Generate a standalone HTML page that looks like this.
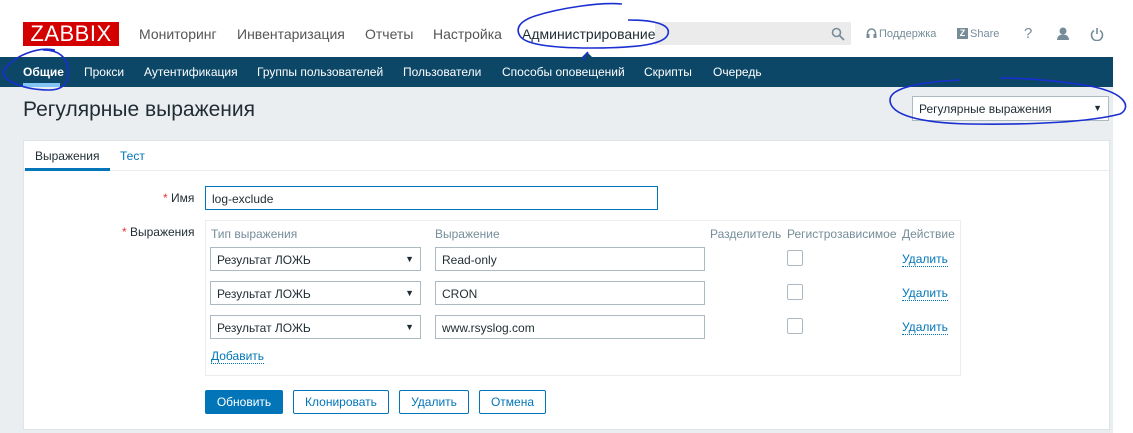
<!DOCTYPE html>
<html><head><meta charset="utf-8"><style>
*{box-sizing:border-box;margin:0;padding:0}
body{width:1133px;height:433px;overflow:hidden;background:#fff;font-family:"Liberation Sans",Arial,sans-serif;position:relative;color:#1f2c33}
.a{position:absolute;white-space:nowrap}
.nav{font-size:14px;color:#555;top:26px}
.sub{font-size:12px;color:#fff;top:65px}
.lbl{font-size:12px;color:#1f2c33}
.star{color:#e33734}
.hdr{font-size:12px;color:#768d99;top:227px}
.sel{position:absolute;left:210px;width:211px;height:24px;border:1px solid #acbbc2;font-size:12px;padding:5px 6px}
.sel:after{content:"▼";position:absolute;right:6px;top:6px;font-size:9px}
.inp{position:absolute;left:435px;width:270px;height:24px;border:1px solid #acbbc2;font-size:12px;padding:5px 6px}
.cb{position:absolute;left:787px;width:16px;height:16px;border:1px solid #acbbc2;border-radius:2px}
.lnk{position:absolute;left:902px;font-size:12px;color:#0275b8;border-bottom:1px dotted #0275b8;line-height:13px}
.btn{position:absolute;top:390px;height:24px;border:1px solid #0275b8;border-radius:2px;font-size:12px;color:#0275b8;text-align:center;line-height:22px;background:#fff}
</style></head><body>
<div class="a" style="left:23px;top:22px;width:96px;height:24px;background:#d40000;color:#fff;font-size:22px;line-height:24px;text-align:center;letter-spacing:0.5px">ZABBIX</div>
<div class="a nav" style="left:139px">Мониторинг</div>
<div class="a nav" style="left:237px">Инвентаризация</div>
<div class="a nav" style="left:365px">Отчеты</div>
<div class="a nav" style="left:433px">Настройка</div>
<div class="a" style="left:655px;top:22px;width:196px;height:23px;background:#ebebeb"></div>
<div class="a nav" style="left:522px;color:#1f2c33">Администрирование</div>
<svg class="a" style="left:831px;top:27px" width="14" height="14"><circle cx="5.5" cy="5.5" r="4" fill="none" stroke="#768d99" stroke-width="1.6"/><line x1="8.5" y1="8.5" x2="13" y2="13" stroke="#768d99" stroke-width="1.8"/></svg>
<svg class="a" style="left:866px;top:28px" width="11" height="11"><path d="M1.5 7V5a4 4 0 0 1 8 0v2" fill="none" stroke="#768d99" stroke-width="1.5"/><rect x="0.5" y="6" width="3" height="4" fill="#768d99"/><rect x="7.5" y="6" width="3" height="4" fill="#768d99"/></svg>
<div class="a" style="left:879px;top:28px;font-size:11px;color:#768d99">Поддержка</div>
<div class="a" style="left:957px;top:28px;width:11px;height:11px;background:#768d99;color:#fff;font-size:9px;font-weight:bold;text-align:center;line-height:11px">Z</div>
<div class="a" style="left:970px;top:28px;font-size:11px;color:#768d99">Share</div>
<div class="a" style="left:1024px;top:25px;font-size:15px;color:#768d99">?</div>
<svg class="a" style="left:1056px;top:27px" width="14" height="14"><circle cx="7" cy="4" r="3.5" fill="#768d99"/><path d="M1 13c0-4 3-5.5 6-5.5s6 1.5 6 5.5z" fill="#768d99"/></svg>
<svg class="a" style="left:1090px;top:27px" width="14" height="14"><path d="M4 3.5A5.5 5.5 0 1 0 10 3.5" fill="none" stroke="#768d99" stroke-width="1.6"/><line x1="7" y1="1" x2="7" y2="7" stroke="#768d99" stroke-width="1.6"/></svg>
<div class="a" style="left:0;top:57px;width:1113px;height:30px;background:#0c4767"></div>
<div class="a" style="left:582px;top:52px;width:0;height:0;border-left:5px solid transparent;border-right:5px solid transparent;border-bottom:5px solid #0c4767"></div>
<div class="a sub" style="left:23px;font-weight:bold">Общие</div>
<div class="a" style="left:23px;top:83px;width:37px;height:4px;background:#84c5f5"></div>
<div class="a sub" style="left:84px">Прокси</div>
<div class="a sub" style="left:144px">Аутентификация</div>
<div class="a sub" style="left:257px">Группы пользователей</div>
<div class="a sub" style="left:403px">Пользователи</div>
<div class="a sub" style="left:502px">Способы оповещений</div>
<div class="a sub" style="left:644px">Скрипты</div>
<div class="a sub" style="left:713px">Очередь</div>
<div class="a" style="left:0;top:87px;width:1113px;height:346px;background:#ebeef0"></div>
<div class="a" style="left:23px;top:98px;font-size:21px;color:#1f2c33">Регулярные выражения</div>
<div class="a" style="left:912px;top:96px;width:197px;height:25px;background:#fff;border:1px solid #acbbc2;font-size:12px;padding:5px 6px">Регулярные выражения<span style="position:absolute;right:6px;top:6px;font-size:9px">▼</span></div>
<div class="a" style="left:23px;top:140px;width:1087px;height:290px;background:#fff;border:1px solid #dfe4e7"></div>
<div class="a" style="left:24px;top:170px;width:1085px;height:1px;background:#ebeef0"></div>
<div class="a" style="left:35px;top:149px;font-size:12px;color:#1f2c33">Выражения</div>
<div class="a" style="left:25px;top:168px;width:85px;height:3px;background:#0275b8"></div>
<div class="a" style="left:120px;top:149px;font-size:12px;color:#0275b8">Тест</div>
<div class="a lbl" style="left:163px;top:191px"><span class="star">*</span> Имя</div>
<div class="a" style="left:205px;top:186px;width:453px;height:24px;border:1px solid #0275b8;font-size:12px;padding:5px 6px">log-exclude</div>
<div class="a lbl" style="left:122px;top:225px"><span class="star">*</span> Выражения</div>
<div class="a" style="left:205px;top:220px;width:756px;height:156px;border:1px solid #ebeef0"></div>
<div class="a hdr" style="left:211px">Тип выражения</div>
<div class="a hdr" style="left:435px">Выражение</div>
<div class="a hdr" style="left:710px">Разделитель</div>
<div class="a hdr" style="left:787px">Регистрозависимое</div>
<div class="a hdr" style="left:902px">Действие</div>
<div class="sel" style="top:247px">Результат ЛОЖЬ</div>
<div class="inp" style="top:247px">Read-only</div>
<div class="cb" style="top:250px"></div>
<div class="lnk" style="top:253px">Удалить</div>
<div class="sel" style="top:281px">Результат ЛОЖЬ</div>
<div class="inp" style="top:281px">CRON</div>
<div class="cb" style="top:284px"></div>
<div class="lnk" style="top:287px">Удалить</div>
<div class="sel" style="top:315px">Результат ЛОЖЬ</div>
<div class="inp" style="top:315px">www.rsyslog.com</div>
<div class="cb" style="top:318px"></div>
<div class="lnk" style="top:321px">Удалить</div>
<div class="lnk" style="left:211px;top:350px">Добавить</div>
<div class="btn" style="left:205px;width:78px;background:#0275b8;color:#fff">Обновить</div>
<div class="btn" style="left:293px;width:96px">Клонировать</div>
<div class="btn" style="left:399px;width:70px">Удалить</div>
<div class="btn" style="left:479px;width:67px">Отмена</div>
<svg class="a" style="left:0;top:0" width="1133" height="433">
<g fill="none" stroke="#1a2fd0" stroke-width="1.6">
<path d="M622 4C600 2 560 8 535 16c-15 5-20 12-15 20c5 8 30 12 70 12c50 0 75-4 78-14c3-10-15-14-40-14"/>
<path d="M588 52l-6 8"/>
<path d="M55 50C35 46 12 58 4 70c-5 10 20 20 45 20c15 0 20-8 19-20c-1-12-8-20-25-20"/>
<path d="M960 80c-40 2-70 8-70 20c0 15 30 23 80 24c60 1 120-2 150-10c10-5 10-20-30-28c-30-5-60-8-90-8"/>
</g></svg>
</body></html>
